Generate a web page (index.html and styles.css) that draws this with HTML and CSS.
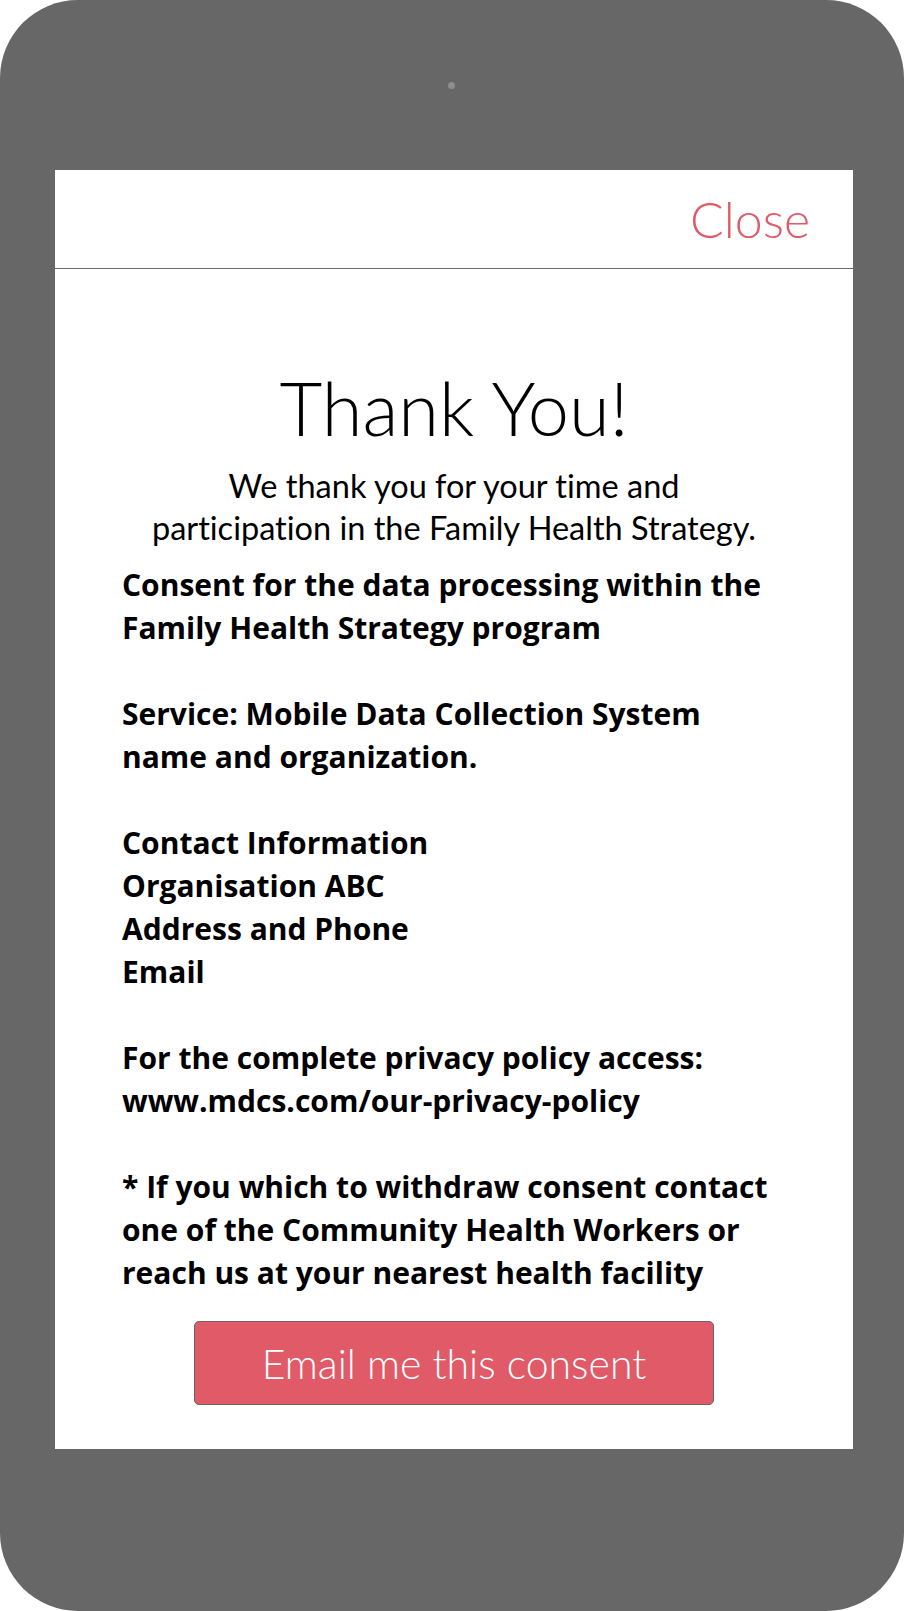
FILE: index.html
```html
<!DOCTYPE html>
<html lang="en">
<head>
<meta charset="utf-8">
<title>Thank You</title>
<link rel="stylesheet" href="styles.css">
</head>
<body>
<div class="phone">
  <div class="camera"></div>
  <div class="screen">
    <div class="topbar">
      <span class="close">Close</span>
    </div>
    <div class="content">
      <h1 class="title">Thank You!</h1>
      <p class="subtitle">We thank you for your time and<br>participation in the Family Health Strategy.</p>
      <div class="consent">
        <p>Consent for the data processing within the<br>Family Health Strategy program</p>
        <p>Service: Mobile Data Collection System<br>name and organization.</p>
        <p>Contact Information<br>Organisation ABC<br>Address and Phone<br>Email</p>
        <p>For the complete privacy policy access:<br>www.mdcs.com/our-privacy-policy</p>
        <p>* If you which to withdraw consent contact<br>one of the Community Health Workers or<br>reach us at your nearest health facility</p>
      </div>
      <div class="actions">
        <button class="email-btn">Email me this consent</button>
      </div>
    </div>
  </div>
</div>
</body>
</html>
```
FILE: styles.css
```css
html, body {
  margin: 0;
  padding: 0;
  background: #ffffff;
}
body {
  width: 904px;
  height: 1611px;
  font-family: Lato, "Open Sans", "Liberation Sans", sans-serif;
  font-variant-ligatures: none;
}
.phone {
  width: 904px;
  height: 1611px;
  background: #676767;
  border-radius: 78px;
  display: flex;
  flex-direction: column;
  box-sizing: border-box;
}
.camera {
  width: 7px;
  height: 7px;
  border-radius: 50%;
  background: #8e8e8e;
  margin: 82px 0 0 448px;
}
.screen {
  margin: 81px 51px 0 55px;
  height: 1279px;
  background: #ffffff;
  display: flex;
  flex-direction: column;
}
.topbar {
  height: 98px;
  border-bottom: 1px solid #6a6a6a;
  display: flex;
  justify-content: flex-end;
  padding-right: 43px;
}
.close {
  color: #e05a67;
  font-size: 50px;
  font-weight: 300;
  line-height: 98px;
}
.content {
  display: flex;
  flex-direction: column;
  padding: 0 0 0 67px;
}
.title {
  margin: 99px 0 0 -67px;
  text-align: center;
  font-size: 74px;
  font-weight: 300;
  line-height: 80px;
  color: #000;
}
.subtitle {
  margin: 17px 0 0 -67px;
  text-align: center;
  font-size: 32.5px;
  font-weight: 400;
  line-height: 42px;
  color: #000;
}
.consent {
  margin-top: 14px;
  font-family: "Open Sans", "Noto Sans", sans-serif;
  font-size: 30px;
  font-weight: 700;
  line-height: 43px;
  color: #000;
}
.consent p {
  margin: 0 0 43px 0;
}
.consent p:last-child {
  margin-bottom: 0;
}
.actions {
  margin: 27px 0 0 -67px;
  display: flex;
  justify-content: center;
}
.email-btn {
  width: 520px;
  height: 84px;
  background: #e05a67;
  border: 1px solid #666666;
  border-radius: 5px;
  color: #ffffff;
  font-family: Lato, "Open Sans", "Liberation Sans", sans-serif;
  font-variant-ligatures: none;
  font-size: 41px;
  font-weight: 300;
  padding: 0;
}
```
